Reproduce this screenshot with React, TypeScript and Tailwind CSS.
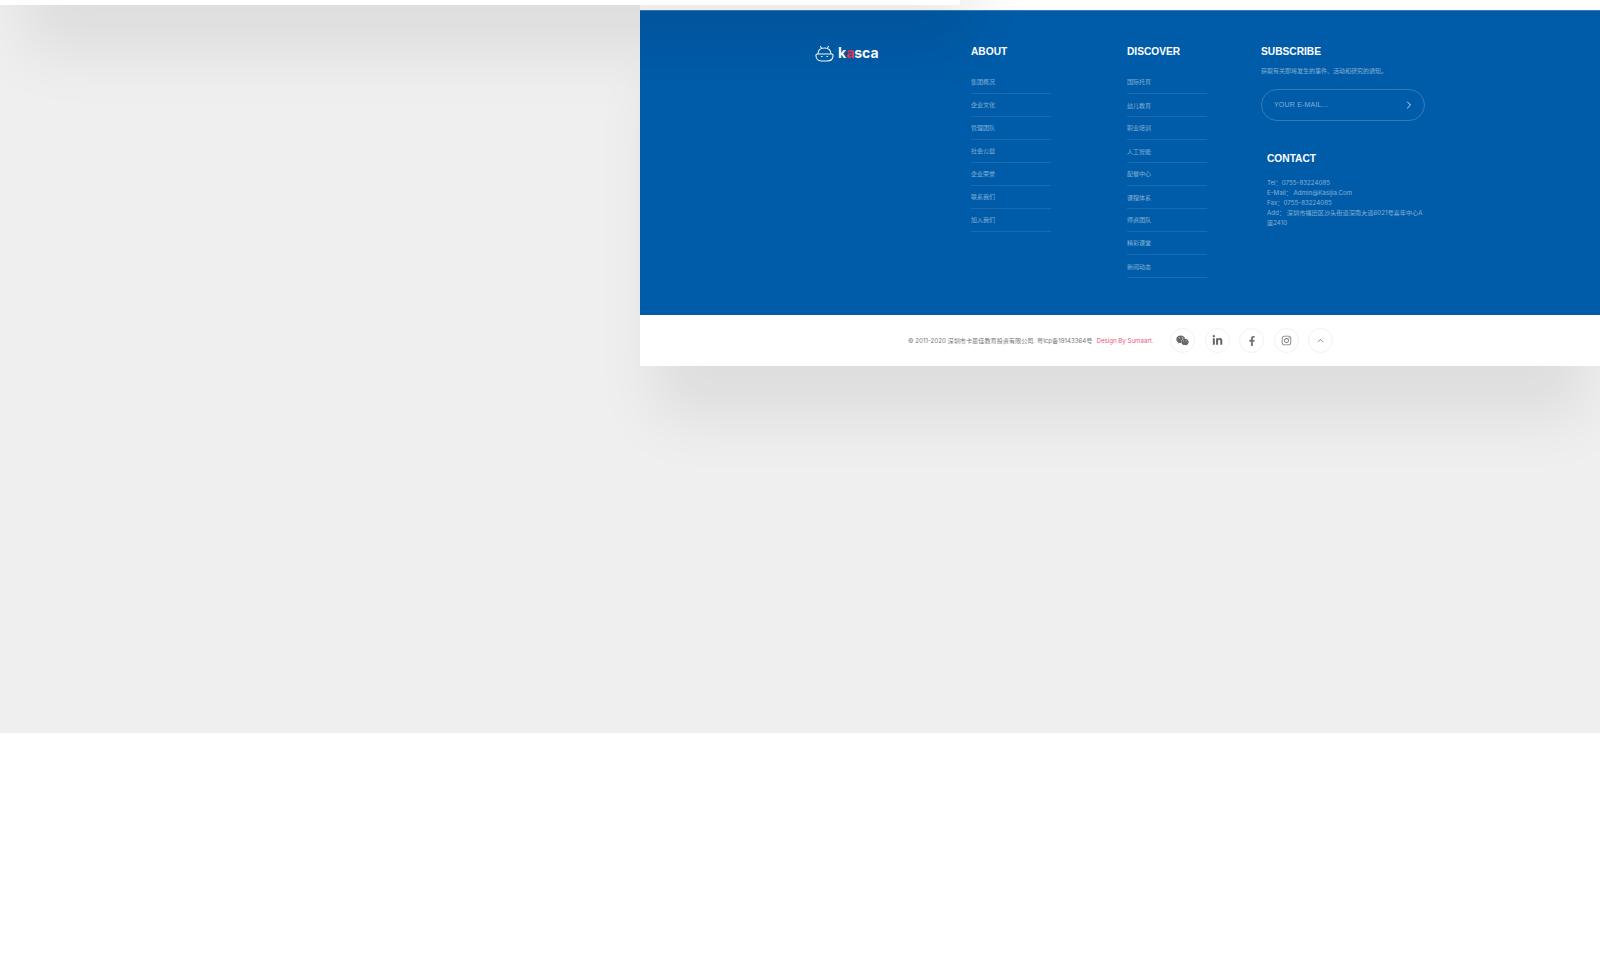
import React from 'react';
import { FaWeixin, FaLinkedinIn, FaFacebookF, FaInstagram } from 'react-icons/fa';
import { ChevronRight, ChevronUp } from 'lucide-react';

const about = [
  { label: '集团概况' },
  { label: '企业文化' },
  { label: '管理团队' },
  { label: '社会公益' },
  { label: '企业荣誉' },
  { label: '联系我们' },
  { label: '加入我们' },
];
const discover = [
  { label: '国际托育' },
  { label: '幼儿教育', nudge: 'pt-[1px]' },
  { label: '职业培训' },
  { label: '人工智能', nudge: 'pt-[1px]' },
  { label: '配餐中心' },
  { label: '课程体系', nudge: 'pt-[1px]' },
  { label: '师资团队' },
  { label: '精彩课堂' },
  { label: '新闻动态', nudge: 'pt-[1px]' },
];

const headingCls = "text-[10.2px] leading-[14px] font-bold text-white font-['Liberation_Sans','Noto_Sans_CJK_SC',sans-serif]";

const LinkColumn = ({ title, items, width }: { title: string; items: { label: string; nudge?: string }[]; width: string }) => (
  <div className={width}>
    <h3 className={headingCls}>{title}</h3>
    <ul className="mt-[12px] w-[80px]">
      {items.map((item) => (
        <li key={item.label} className={`h-[23px] leading-[21px] text-[6px] text-white/50 border-b border-[#1a6cb2] ${item.nudge ?? ''}`}>
          {item.label}
        </li>
      ))}
    </ul>
  </div>
);

const Logo = () => (
  <div className="flex items-center gap-[3px] w-[156px] h-[20px] mt-[-2px]">
    <svg width="19" height="17" viewBox="0 0 19 17" fill="none" stroke="white" strokeWidth="1.1">
      <path d="M5.5 1.5 L6.5 3 M13.5 1.5 L12.5 3" strokeLinecap="round" />
      <path d="M3 9 C3 5 5.5 3 9.5 3 C13.5 3 16 5 16 9" />
      <path d="M1 10 C1 9.2 1.6 9 2.2 9 H16.8 C17.4 9 18 9.2 18 10 V11 C18 14.5 15 16 12 16 H7 C4 16 1 14.5 1 11 Z" />
      <path d="M6 11.5 H7.5 M11.5 11.5 H13" />
    </svg>
    <span className="text-[14px] leading-none font-bold text-white ml-[1px]">
      k<span className="text-[#e8354f]">a</span>sca
    </span>
  </div>
);

const Social = ({ children }: { children: React.ReactNode }) => (
  <a className="w-[25px] h-[25px] rounded-full border border-[#f2f2f2] flex items-center justify-center text-[#666666]">
    {children}
  </a>
);

export default function App() {
  return (
    <div className="h-[971px] bg-white overflow-hidden font-['Inter','Noto_Sans_CJK_SC',sans-serif]">
      <div className="h-[733px] bg-[#efefef] overflow-hidden">
        {/* section above, scrolled almost out of view */}
        <div className="relative z-10 h-[300px] mt-[-295px] w-[960px] bg-white shadow-[20px_50px_60px_-5px_rgba(0,0,0,0.08)]" />
        <footer className="ml-[640px] mt-[-5px] pt-[10px] bg-white shadow-[0_66px_60px_-16px_rgba(0,0,0,0.08)]">
          <div className="h-[305px] bg-[#005ca9] border-t border-[#3c7cb3] pt-[34px] pl-[175px] flex">
            <Logo />
            <LinkColumn title="ABOUT" items={about} width="w-[156px]" />
            <LinkColumn title="DISCOVER" items={discover} width="w-[134px]" />
            <div>
              <h3 className={headingCls}>SUBSCRIBE</h3>
              <p className="mt-[7px] text-[6px] leading-[10px] text-white/50">获取有关即将发生的事件、活动和研究的通知。</p>
              <div className="mt-[13px] w-[164px] h-[32px] rounded-full border border-white/20 pl-[12px] pr-[9px] flex items-center justify-between">
                <span className="text-[7px] text-white/50 font-['Liberation_Sans',sans-serif] tracking-[0.2px]">YOUR E-MAIL...</span>
                <ChevronRight size={12} strokeWidth={1.6} className="text-white" />
              </div>
              <div className="ml-[6px] mt-[31px] w-[158px]">
                <h3 className={headingCls}>CONTACT</h3>
                <div className="mt-[12px] text-[6.2px] leading-[10px] text-white/50">
                  <p>Tel：0755-83224085</p>
                  <p>E-Mail： Admin@Kasijia.Com</p>
                  <p>Fax：0755-83224085</p>
                  <p>Add： 深圳市福田区沙头街道深南大道6021号喜年中心A座2410</p>
                </div>
              </div>
            </div>
          </div>
          <div className="h-[51px] bg-white flex items-center pl-[268px]">
            <p className="text-[6.15px] leading-[10px] text-[#777777] w-[262px] whitespace-nowrap">
              © 2011-2020 深圳市卡思佳教育投资有限公司. 粤Icp备19143364号
              <span className="ml-[4px] text-[#ea5a7c]">Design By Sumaart.</span>
            </p>
            <div className="flex gap-[9.5px]">
              <Social><FaWeixin size={13} /></Social>
              <Social><FaLinkedinIn size={11} /></Social>
              <Social><FaFacebookF size={10} className="text-[#777777]" /></Social>
              <Social><FaInstagram size={11} className="text-[#777777]" /></Social>
              <Social><ChevronUp size={9} /></Social>
            </div>
          </div>
        </footer>
      </div>
    </div>
  );
}
